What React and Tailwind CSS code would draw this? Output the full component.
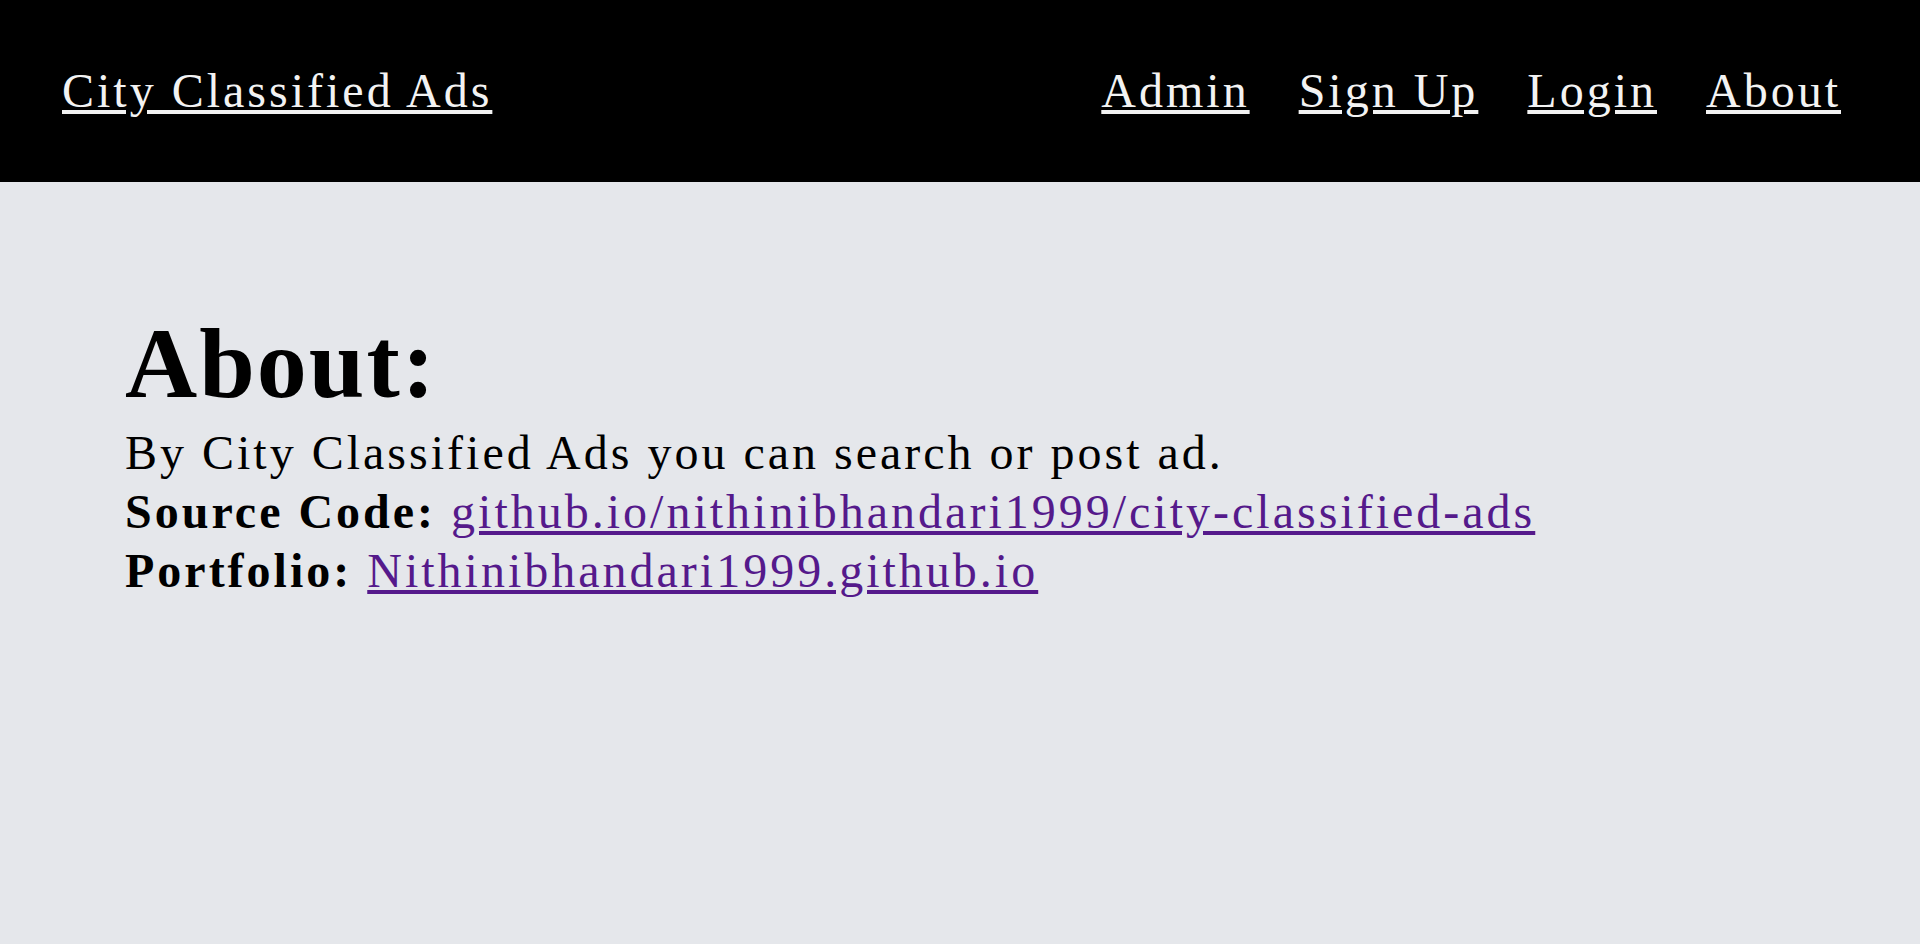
export default function App() {
  return (
    <div className="min-h-[944px] bg-[#e5e7eb] font-['Liberation_Serif',serif]">
      <header className="flex h-[182px] items-center justify-between bg-black pl-[62px] pr-[79px] text-[48px] tracking-[3px] text-[#f3f3f3]">
        <a href="#" className="underline">City Classified Ads</a>
        <nav className="flex items-center gap-[49px]">
          <a href="#" className="underline">Admin</a>
          <a href="#" className="underline">Sign Up</a>
          <a href="#" className="underline">Login</a>
          <a href="#" className="underline">About</a>
        </nav>
      </header>
      <main className="pl-[125px] pt-[123px] text-black">
        <h1 className="text-[100px] font-bold leading-[118px] tracking-[2px]">About:</h1>
        <div className="text-[48px] leading-[59px] tracking-[3px]">
          <p>By City Classified Ads you can search or post ad.</p>
          <p>
            <span className="font-bold">Source Code:</span>{" "}
            <a href="#" className="text-[#551a8b] underline">github.io/nithinibhandari1999/city-classified-ads</a>
          </p>
          <p>
            <span className="font-bold">Portfolio:</span>{" "}
            <a href="#" className="text-[#551a8b] underline">Nithinibhandari1999.github.io</a>
          </p>
        </div>
      </main>
    </div>
  );
}
